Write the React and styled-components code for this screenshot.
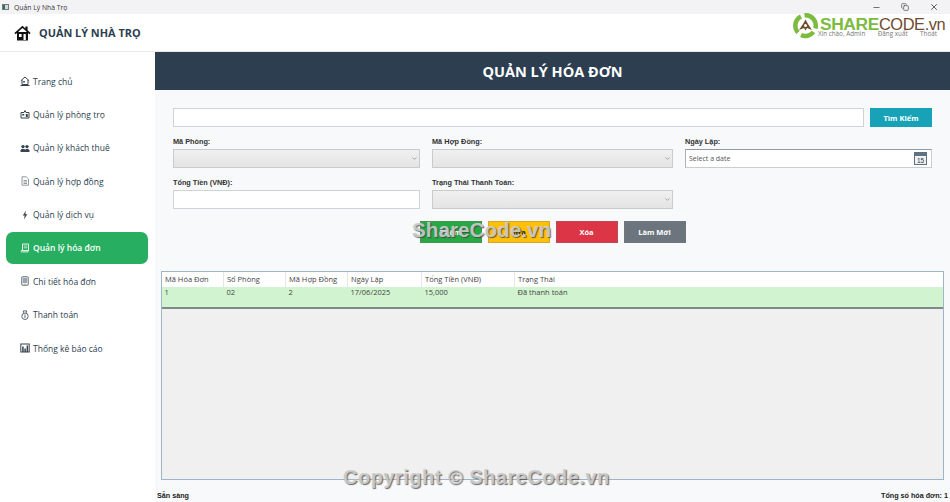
import React from "react";
import styled, { createGlobalStyle } from "styled-components";
import { LuMinus, LuCopy, LuX, LuChevronDown } from "react-icons/lu";

const GlobalStyle = createGlobalStyle`
  html, body { margin: 0; padding: 0; background: #fff; }
  * { box-sizing: border-box; }
`;

const Window = styled.div`
  position: relative;
  width: 950px;
  height: 502px;
  overflow: hidden;
  display: flex;
  flex-direction: column;
  font-family: "Open Sans", "Noto Sans", sans-serif;
  color: #2c3e50;
`;

const TitleBar = styled.div`
  height: 14px;
  flex: none;
  display: flex;
  align-items: center;
  padding: 0 11px 0 2px;
  background: #f3f3f5;
  font-size: 6.8px;
  color: #333;
`;

const AppGlyph = styled.span`
  width: 7px;
  height: 6px;
  margin-right: 5px;
  background: linear-gradient(90deg, #2f6f62 50%, #cfd8dc 50%);
  border: 1px solid #777;
`;

const WindowControls = styled.div`
  margin-left: auto;
  display: flex;
  align-items: center;
  gap: 20px;
  color: #444;
`;

const TopBar = styled.header`
  height: 38px;
  flex: none;
  display: flex;
  align-items: center;
  padding-left: 14px;
  background: #fff;
  border-bottom: 1px solid #e6e8ea;
`;

const AppName = styled.h1`
  margin: 0 0 0 8px;
  font-size: 10.9px;
  font-weight: 700;
  color: #2c3e50;
`;

const Body = styled.div`
  flex: 1;
  min-height: 0;
  display: flex;
`;

const Sidebar = styled.nav`
  width: 155px;
  flex: none;
  display: flex;
  flex-direction: column;
  gap: 1.4px;
  padding: 13px 6px 0;
  background: #fff;
`;

const NavItem = styled.div`
  width: 142px;
  height: 32px;
  flex: none;
  display: flex;
  align-items: center;
  gap: 3px;
  padding-left: 14px;
  border-radius: 7px;
  font-size: 8.5px;
  font-weight: ${(p) => (p.$active ? 600 : 500)};
  color: ${(p) => (p.$active ? "#fff" : "#2c3e50")};
  background: ${(p) => (p.$active ? "#27ae60" : "transparent")};
`;

const NavIcon = styled.svg`
  width: 10px;
  height: 10px;
  flex: none;
  color: ${(p) => (p.$active ? "#e8f5ec" : "#38444f")};
`;

const Main = styled.main`
  flex: 1;
  min-width: 0;
  display: flex;
  flex-direction: column;
  background: #f7f9fb;
`;

const PageHeader = styled.h2`
  height: 38px;
  flex: none;
  margin: 0;
  display: flex;
  align-items: center;
  justify-content: center;
  background: #2c3e50;
  color: #fff;
  font-size: 14.5px;
  font-weight: 700;
`;

const Form = styled.section`
  padding: 18px 18px 0;
  display: flex;
  flex-direction: column;
  gap: 10px;
`;

const SearchRow = styled.div`
  display: flex;
  gap: 6px;
`;

const TextBox = styled.div`
  height: 19px;
  flex: 1;
  background: #fff;
  border: 1px solid #cfd3d6;
`;

const SearchButton = styled.div`
  width: 62px;
  height: 19px;
  flex: none;
  display: flex;
  align-items: center;
  justify-content: center;
  background: #17a2b8;
  color: #fff;
  font: 700 7.5px "Open Sans", sans-serif;
`;

const FieldGrid = styled.div`
  display: grid;
  grid-template-columns: 247px 241px 247px;
  column-gap: 12px;
  row-gap: 10px;
`;

const Field = styled.div`
  display: flex;
  flex-direction: column;
`;

const Label = styled.label`
  height: 12px;
  font: 700 7.3px/10px "Liberation Sans", Arial, sans-serif;
  color: #333;
`;

const Combo = styled.div`
  height: 19px;
  display: flex;
  align-items: center;
  justify-content: flex-end;
  padding-right: 1px;
  background: linear-gradient(#f0f0f0, #e4e4e4);
  border: 1px solid #c9cbcd;
  color: #777;
`;

const DateBox = styled.div`
  height: 19px;
  display: flex;
  align-items: center;
  justify-content: space-between;
  padding: 0 4px 0 3px;
  background: #fff;
  border: 1px solid #c9cdd0;
  border-top-color: #8d9aa6;
  border-left-color: #a9b3bb;
  font-size: 7px;
  color: #555;
`;

const Actions = styled.div`
  margin-top: 2px;
  display: flex;
  justify-content: center;
  gap: 6px;
`;

const ActionButton = styled.div`
  width: 62px;
  height: 22px;
  display: flex;
  align-items: center;
  justify-content: center;
  background: ${(p) => p.$bg};
  color: ${(p) => p.$fg || "#fff"};
  border: 1px solid rgba(120, 120, 120, 0.35);
  font: 700 7.5px "Open Sans", sans-serif;
`;

const TableWrap = styled.section`
  margin: 28px 6px 0;
  height: 209px;
  display: flex;
  flex-direction: column;
  background: #f0f0f0;
  border: 1px solid #9fb4c6;
  font-size: 7.5px;
  color: #444;
`;

const Row = styled.div`
  display: grid;
  grid-template-columns: 62px 62px 62px 74px 93px 1fr;
  flex: none;
`;

const HeadRow = styled(Row)`
  height: 15px;
  background: #fff;
`;

const DataRow = styled(Row)`
  height: 22px;
  background: #d2f3d0;
  border-bottom: 2px solid #7f8a84;
`;

const HeadCell = styled.div`
  padding-left: 3px;
  line-height: 15px;
  border-right: 1px solid #e6e6e6;
  &:last-child { border-right: 0; }
`;

const DataCell = styled.div`
  padding-left: 2.5px;
  line-height: 10px;
`;

const StatusBar = styled.footer`
  flex: 1;
  display: flex;
  align-items: flex-end;
  justify-content: space-between;
  padding: 0 2px 1px;
  font: 700 7.2px/10px "Liberation Sans", Arial, sans-serif;
  color: #222;
`;

const Logo = styled.div`
  position: absolute;
  top: 12px;
  left: 792px;
  display: flex;
  align-items: flex-start;
`;

const LogoText = styled.div`
  margin: 6px 0 0 1px;
  font: 400 16.4px/13px "Liberation Sans", Arial, sans-serif;
  color: #6f4a2f;
  letter-spacing: -0.4px;
  white-space: nowrap;
`;

const LogoShare = styled.span`
  font-size: 17.4px;
  font-weight: 700;
  color: #7cbb3f;
`;

const UserLinks = styled.div`
  position: absolute;
  top: 31px;
  left: 818px;
  width: 119px;
  display: flex;
  justify-content: space-between;
  font-size: 6.3px;
  line-height: 5px;
  color: #777;
`;

const Watermark = styled.div`
  position: absolute;
  top: ${(p) => p.$top}px;
  left: ${(p) => p.$left}px;
  font: 700 ${(p) => p.$size}px "Liberation Sans", Arial, sans-serif;
  letter-spacing: ${(p) => p.$spacing || 0}px;
  color: rgba(205, 205, 205, 0.92);
  text-shadow: 1px 1px 1px rgba(60, 60, 60, 0.75);
  white-space: nowrap;
  pointer-events: none;
`;

const icons = {
  home: (
    <>
      <path d="M5 1 .8 4.800M5 1l4.200 3.800M2 4v4.500h6V4" fill="none" stroke="currentColor" />
      <rect x="3.200" y="5" width="1.600" height="1.600" fill="currentColor" />
      <path d="M.5 9.500h9" stroke="currentColor" />
    </>
  ),
  rooms: (
    <>
      <path d="M1 3.500h3l1-2 1 2h3v5.500H1z" fill="none" stroke="currentColor" />
      <rect x="2.200" y="5" width="2" height="1.500" fill="currentColor" />
      <rect x="5.800" y="5" width="2" height="3" fill="currentColor" />
    </>
  ),
  guests: (
    <>
      <circle cx="3" cy="3.600" r="1.700" fill="currentColor" />
      <circle cx="7" cy="3.600" r="1.700" fill="currentColor" />
      <path d="M.5 9V7.300Q.5 5.800 3 5.800t2 1.500q0-1.500 2-1.500t2.500 1.500V9z" fill="currentColor" />
    </>
  ),
  contract: (
    <path d="M2 .8h4.200L8.500 3v6.200H2zM3.500 4.500h3.500M3.500 6h3.500M3.500 7.500h3.500" fill="none" stroke="#77828b" strokeWidth=".8" />
  ),
  service: <path d="M6 .5 2.800 5.500h1.900L4 9.500l3.300-5.200H5.300z" fill="currentColor" />,
  invoice: (
    <>
      <path d="M2.500 1h6v6.800H2.500z" fill="none" stroke="currentColor" />
      <path d="M1.200 7.500h6.800v1.500H1.200zM3.800 3h3.500M3.800 4.800h3.500" stroke="currentColor" strokeWidth=".8" fill="none" />
    </>
  ),
  detail: (
    <>
      <rect x="1.800" y=".8" width="6.400" height="8.400" rx=".6" fill="none" stroke="#59646d" />
      <rect x="3" y="2" width="4" height="5" fill="#9aa3aa" />
      <circle cx="5" cy="8" r=".5" fill="#59646d" />
    </>
  ),
  payment: (
    <>
      <circle cx="5" cy="6.300" r="3.200" fill="none" stroke="currentColor" strokeWidth=".8" />
      <path d="M3.800 3.100 3.300.9h3.400L6.200 3.100M5 4.600v3.400" fill="none" stroke="currentColor" strokeWidth=".8" />
    </>
  ),
  stats: (
    <>
      <rect x=".8" y="1" width="8.400" height="8" fill="none" stroke="currentColor" />
      <path d="M2.200 3.500h1.500V9H2.200zM4.400 5.500h1.500V9H4.400zM6.600 2.500h1.500V9H6.600z" fill="currentColor" />
    </>
  ),
};

const navItems = [
  ["Trang chủ", "home"],
  ["Quản lý phòng trọ", "rooms"],
  ["Quản lý khách thuê", "guests"],
  ["Quản lý hợp đồng", "contract"],
  ["Quản lý dịch vụ", "service"],
  ["Quản lý hóa đơn", "invoice", true],
  ["Chi tiết hóa đơn", "detail"],
  ["Thanh toán", "payment"],
  ["Thống kê báo cáo", "stats"],
];

const headers = ["Mã Hóa Đơn", "Số Phòng", "Mã Hợp Đồng", "Ngày Lập", "Tổng Tiền (VNĐ)", "Trạng Thái"];
const cells = ["1", "02", "2", "17/06/2025", "15,000", "Đã thanh toán"];

function HouseLogo() {
  return (
    <svg width="17" height="16" viewBox="0 0 17 16">
      <path d="M8.500 .8.400 8l1.200 1.300L3 8v7.500h11V8l1.400 1.300L16.600 8l-3-2.700V1.500h-2.200v1.900z" fill="#111" />
      <path d="M8.500 3 4.500 6.600v.4h8v-.4z" fill="#fff" />
      <rect x="5" y="9" width="2.600" height="3" fill="#fff" />
      <rect x="9.500" y="9" width="2.300" height="6" fill="#fff" />
    </svg>
  );
}

function ShareLogo() {
  return (
    <svg width="27" height="27" viewBox="0 0 27 27">
      <g fill="none" stroke="#7cbb3f" strokeWidth="4.500">
        <path d="M6 20.500A10.200 10.200 0 0 1 9 4.500" />
        <path d="M12.500 3.300a10.200 10.200 0 0 1 10.800 13.200" />
        <path d="M21.500 20a10.200 10.200 0 0 1-12.500 3" />
      </g>
      <path d="M13.500 7.500 16 12l4 6-5-2-1.500 2.500L12 16l-5 2 4-6z" fill="#6f4a2f" />
      <circle cx="13.500" cy="13.500" r="1.500" fill="#fff" />
    </svg>
  );
}

function CalendarIcon() {
  return (
    <svg width="13" height="13" viewBox="0 0 13 13">
      <rect x=".5" y=".5" width="12" height="12" fill="#eef2f6" stroke="#60707f" />
      <rect x="1" y="1" width="11" height="3" fill="#5d7487" />
      <text x="6.500" y="11" fontSize="6.500" fontFamily="Liberation Sans" textAnchor="middle" fill="#333">15</text>
    </svg>
  );
}

export default function App() {
  return (
    <Window>
      <GlobalStyle />
      <TitleBar>
        <AppGlyph />
        Quản Lý Nhà Trọ
        <WindowControls>
          <LuMinus size={9} />
          <LuCopy size={8} />
          <LuX size={10} />
        </WindowControls>
      </TitleBar>
      <TopBar>
        <HouseLogo />
        <AppName>QUẢN LÝ NHÀ TRỌ</AppName>
      </TopBar>
      <Body>
        <Sidebar>
          {navItems.map(([label, icon, active]) => (
            <NavItem key={label} $active={active}>
              <NavIcon viewBox="0 0 10 10" $active={active}>{icons[icon]}</NavIcon>
              {label}
            </NavItem>
          ))}
        </Sidebar>
        <Main>
          <PageHeader>QUẢN LÝ HÓA ĐƠN</PageHeader>
          <Form>
            <SearchRow>
              <TextBox />
              <SearchButton>Tìm Kiếm</SearchButton>
            </SearchRow>
            <FieldGrid>
              <Field>
                <Label>Mã Phòng:</Label>
                <Combo><LuChevronDown size={7} /></Combo>
              </Field>
              <Field>
                <Label>Mã Hợp Đồng:</Label>
                <Combo><LuChevronDown size={7} /></Combo>
              </Field>
              <Field>
                <Label>Ngày Lập:</Label>
                <DateBox>Select a date<CalendarIcon /></DateBox>
              </Field>
              <Field>
                <Label>Tổng Tiền (VNĐ):</Label>
                <TextBox />
              </Field>
              <Field>
                <Label>Trạng Thái Thanh Toán:</Label>
                <Combo><LuChevronDown size={7} /></Combo>
              </Field>
            </FieldGrid>
            <Actions>
              <ActionButton $bg="#28a745">Thêm</ActionButton>
              <ActionButton $bg="#ffc107" $fg="#222">Sửa</ActionButton>
              <ActionButton $bg="#dc3545">Xóa</ActionButton>
              <ActionButton $bg="#6c757d">Làm Mới</ActionButton>
            </Actions>
          </Form>
          <TableWrap>
            <HeadRow>
              {headers.map((h) => <HeadCell key={h}>{h}</HeadCell>)}
            </HeadRow>
            <DataRow>
              {cells.map((c) => <DataCell key={c}>{c}</DataCell>)}
            </DataRow>
          </TableWrap>
          <StatusBar>
            <span>Sẵn sàng</span>
            <span>Tổng số hóa đơn: 1</span>
          </StatusBar>
        </Main>
      </Body>
      <Logo>
        <ShareLogo />
        <LogoText><LogoShare>SHARE</LogoShare>CODE.vn</LogoText>
      </Logo>
      <UserLinks>
        <span>Xin chào, Admin</span>
        <span>Đăng xuất</span>
        <span>Thoát</span>
      </UserLinks>
      <Watermark $top={218} $left={412} $size={20.7}>ShareCode.vn</Watermark>
      <Watermark $top={466} $left={343} $size={20} $spacing={0.5}>Copyright © ShareCode.vn</Watermark>
    </Window>
  );
}
